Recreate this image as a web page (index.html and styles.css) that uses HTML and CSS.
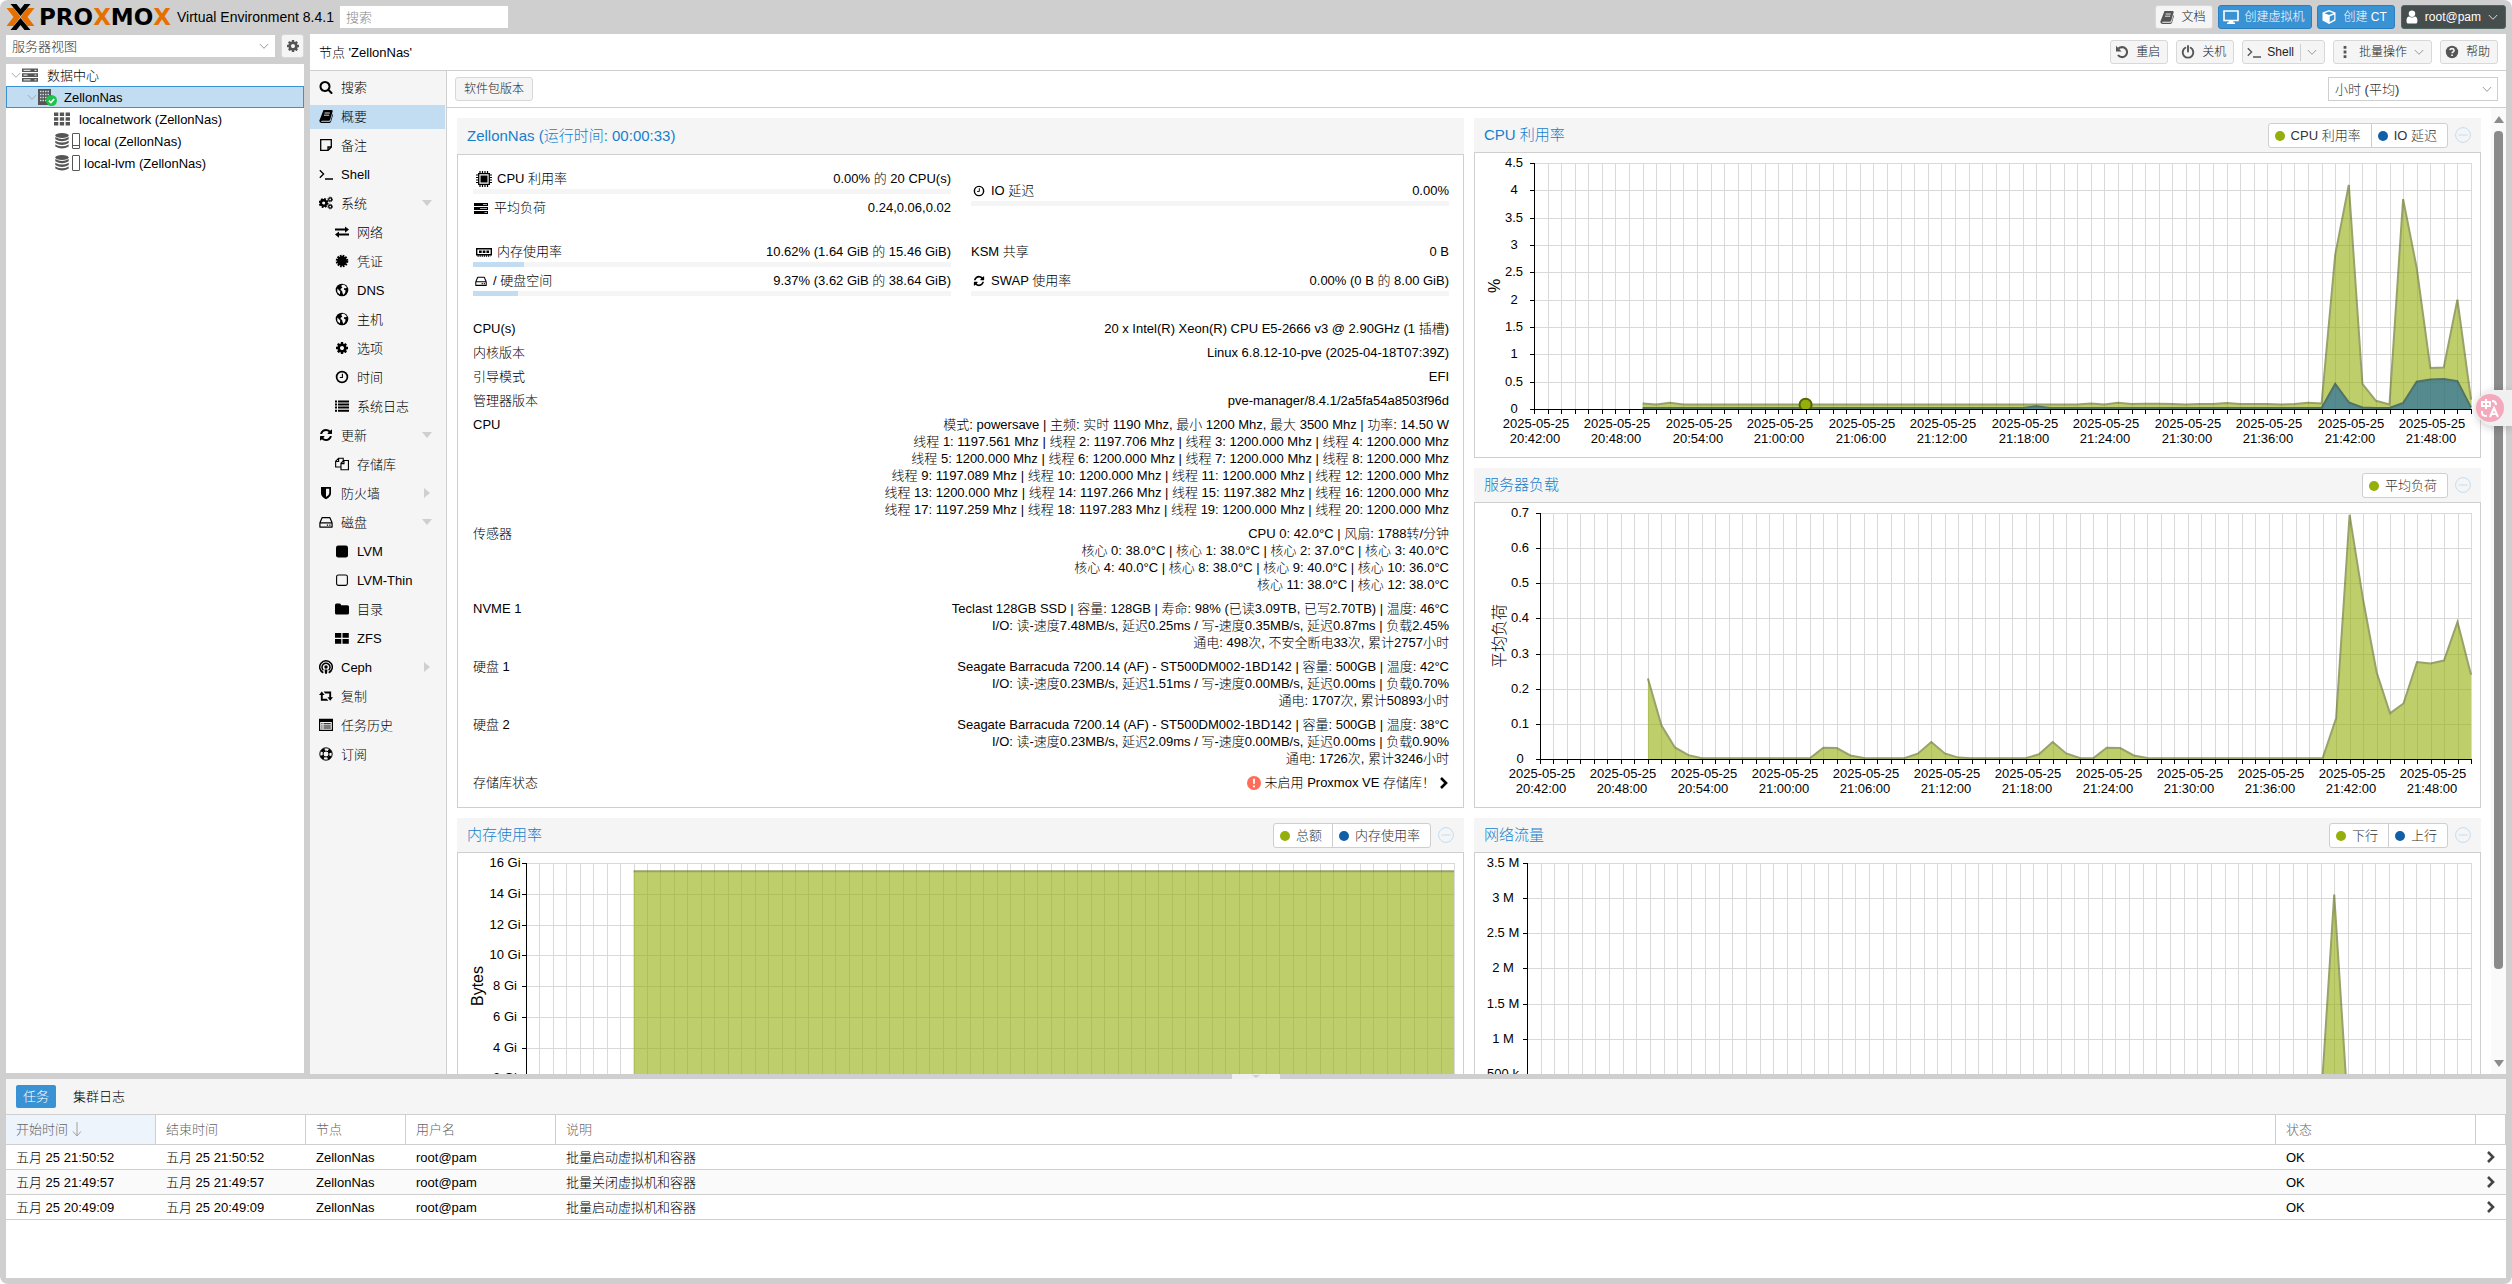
FILE: index.html
```html
<!DOCTYPE html>
<html lang="zh-CN">
<head>
<meta charset="utf-8">
<title>ZellonNas - Proxmox Virtual Environment</title>
<link rel="stylesheet" href="styles.css">
</head>
<body>
<svg class="sprite" aria-hidden="true">
  <symbol id="search" viewBox="0 0 1792 1792"><path d="M1216 832q0-185-131.500-316.500t-316.500-131.500-316.500 131.500-131.500 316.500 131.500 316.500 316.500 131.500 316.500-131.500 131.500-316.500zm512 832q0 52-38 90t-90 38q-54 0-90-38l-343-342q-179 124-399 124-143 0-273.500-55.500t-225-150-150-225-55.500-273.500 55.500-273.500 150-225 225-150 273.500-55.500 273.500 55.500 225 150 150 225 55.500 273.500q0 220-124 399l343 343q37 37 37 90z"/></symbol>
  <symbol id="cog" viewBox="0 0 1792 1792"><path d="M1152 896q0-106-75-181t-181-75-181 75-75 181 75 181 181 75 181-75 75-181zm512-109v222q0 12-8 23t-20 13l-185 28q-19 54-39 91 35 50 107 138 10 12 10 25t-9 23q-27 37-99 108t-94 71q-12 0-26-9l-138-108q-44 23-91 38-16 136-29 186-7 28-36 28h-222q-14 0-24.500-8.500t-11.500-21.500l-28-184q-49-16-90-37l-141 107q-10 9-25 9-14 0-25-11-126-114-165-168-7-10-7-23 0-12 8-23 15-21 51-66.500t54-70.500q-27-50-41-99l-183-27q-13-2-21-12.500t-8-23.500v-222q0-12 8-23t19-13l186-28q14-46 39-92-40-57-107-138-10-12-10-24 0-10 9-23 26-36 98.500-107.500t94.500-71.500q13 0 26 10l138 107q44-23 91-38 16-136 29-186 7-28 36-28h222q14 0 24.500 8.500t11.500 21.500l28 184q49 16 90 37l142-107q9-9 24-9 13 0 25 10 129 119 165 170 7 8 7 22 0 12-8 23-15 21-51 66.500t-54 70.500q26 50 41 98l183 28q13 2 21 12.500t8 23.500z"/></symbol>
  <symbol id="refresh" viewBox="0 0 1792 1792"><path d="M1639 1056q0 5-1 7-64 268-268 434.500t-478 166.500q-146 0-282.500-55t-243.500-157l-129 129q-19 19-45 19t-45-19-19-45v-448q0-26 19-45t45-19h448q26 0 45 19t19 45-19 45l-137 137q71 66 161 102t187 36q134 0 250-65t186-179q11-17 53-117 8-23 30-23h192q13 0 22.500 9.500t9.500 22.500zm25-800v448q0 26-19 45t-45 19h-448q-26 0-45-19t-19-45 19-45l138-138q-148-137-349-137-134 0-250 65t-186 179q-11 17-53 117-8 23-30 23h-199q-13 0-22.500-9.500t-9.500-22.500v-7q65-268 270-434.500t480-166.500q146 0 284 55.500t245 156.500l130-129q19-19 45-19t45 19 19 45z"/></symbol>
  <symbol id="user" viewBox="200 100 1400 1600"><path d="M1536 1399q0 109-62.500 187t-150.500 78h-854q-88 0-150.500-78t-62.500-187q0-85 8.500-160.500t31.500-152 58.500-131 94-89 134.500-34.500q131 128 313 128t313-128q76 0 134.500 34.500t94 89 58.500 131 31.500 152 8.500 160.500zm-256-887q0 159-112.500 271.500t-271.500 112.500-271.500-112.500-112.500-271.500 112.500-271.500 271.500-112.500 271.500 112.500 112.500 271.500z"/></symbol>
  <symbol id="book" viewBox="0 0 14 14"><path d="M4.500 1h8.200q1.200.2.900 1.400l-2.300 8q-.4 1.300-1.600 1.300H3q-.9 0-1 .5t.8.500h7.600q.9 0 1.200-.8l1.900-7q.7.500.4 1.400l-1.800 6.300q-.4 1.300-1.600 1.300H2.300Q.2 13.700.4 11.600z"/><path d="M5.600 4h5.200M5 6.200h5.200" stroke="#f5f5f5" stroke-width=".9"/></symbol>
  <symbol id="note" viewBox="0 0 14 14"><path d="M1.700 1.700h10.600v7.500l-3.200 3.100H1.700zM12 9H9v3" fill="none" stroke="currentColor" stroke-width="1.300"/></symbol>
  <symbol id="terminal" viewBox="0 0 14 14"><path d="M.8 3.200 4.600 7 .8 10.800M6 12h8" fill="none" stroke="currentColor" stroke-width="1.300"/></symbol>
  <symbol id="cogs" viewBox="0 0 15 14"><circle cx="5" cy="7" r="3" fill="none" stroke="currentColor" stroke-width="2.600"/><circle cx="5" cy="7" r="4.400" fill="none" stroke="currentColor" stroke-width="1.800" stroke-dasharray="1.900 1.556"/><g fill="none" stroke="currentColor"><circle cx="12" cy="3.200" r="1.600" stroke-width="1.300"/><circle cx="12" cy="3.200" r="2.500" stroke-dasharray="1.200 .76"/><circle cx="12" cy="10.800" r="1.600" stroke-width="1.300"/><circle cx="12" cy="10.800" r="2.500" stroke-dasharray="1.200 .76"/></g></symbol>
  <symbol id="exchange" viewBox="0 0 14 14"><path d="M0 3.600h10V1.400L14 4.600l-4 3.200V5.600H0zM14 8.600H4V6.600L0 9.600l4 3.200v-2.200h10z"/></symbol>
  <symbol id="certificate" viewBox="0 0 14 14"><circle cx="7" cy="7" r="5"/><circle cx="7" cy="7" r="5.300" fill="none" stroke="currentColor" stroke-width="2" stroke-dasharray="1.700 1.075"/></symbol>
  <symbol id="globe" viewBox="0 0 14 14"><circle cx="7" cy="7" r="6.300"/><path d="M6.600 1.900 9 1.700l2.900 2.600-1 1-1.500-.3-.6 1.500 1.800.9-.4 2.200-1.600 2.300-1.100-2-.4-1.900L5.500 7 6 5.500l1.400-.8-.9-1.200zM2.300 5.600l1.800 1.600 1.200 1.600-.6 2.600L2.300 9z" fill="#f5f5f5"/></symbol>
  <symbol id="clock" viewBox="0 0 14 14"><circle cx="7" cy="7" r="5.400" fill="none" stroke="currentColor" stroke-width="1.700"/><path d="M7.400 3.800v3.700H4.800" fill="none" stroke="currentColor" stroke-width="1.100"/></symbol>
  <symbol id="list" viewBox="0 0 14 14"><path d="M0 1.400h2v2H0zM3 1.400h11v2H3zM0 4.500h2v2H0zM3 4.500h11v2H3zM0 7.600h2v2H0zM3 7.600h11v2H3zM0 10.700h2v2H0zM3 10.700h11v2H3z"/></symbol>
  <symbol id="files" viewBox="0 0 15 14"><path d="M6.400 10.200H.7V4L3.800.9h5v2.500M.9 4.300h3V1M6.400 6.200l3-2.900h5v9.800h-8zM6.600 6.600h3v-3" fill="none" stroke="currentColor" stroke-width="1.200"/></symbol>
  <symbol id="shield" viewBox="0 0 14 14"><path d="M2 1h10v6.200q0 3.600-5 6-5-2.400-5-6zM7 2.800v8.300q3.300-1.600 3.300-4V2.800z" fill-rule="evenodd"/></symbol>
  <symbol id="hdd" viewBox="0 0 14 14"><path d="M.9 7.800h12.200v4.300H.9zM.9 7.800l2.300-5.200h7.600l2.300 5.200" fill="none" stroke="currentColor" stroke-width="1.200" stroke-linejoin="round"/><path d="M7.800 9.400h1.300v1.300H7.800zM10.200 9.400h1.300v1.300h-1.300z"/></symbol>
  <symbol id="square" viewBox="0 0 14 14"><rect x="1" y="1.500" width="12" height="12" rx="2.200"/></symbol>
  <symbol id="square-o" viewBox="0 0 14 14"><rect x="1.600" y="2" width="10.800" height="10.400" rx="1.800" fill="none" stroke="currentColor" stroke-width="1.100"/></symbol>
  <symbol id="folder" viewBox="0 0 14 14"><path d="M0 3q0-1.500 1.500-1.500h3Q6 1.500 6 3v.3h6.500Q14 3.300 14 4.800V11q0 1.500-1.500 1.500h-11Q0 12.500 0 11z"/></symbol>
  <symbol id="th-large" viewBox="0 0 14 14"><path d="M0 2h6.300v4.700H0zM7.500 2h6.300v4.700H7.500zM0 8h6.300v4.700H0zM7.500 8h6.300v4.700H7.500z"/></symbol>
  <symbol id="ceph" viewBox="0 0 14 14"><path d="M4.300 12.800A6.300 6.300 0 1 1 9.700 12.800M4.400 10.300A4 4 0 1 1 9.600 10.300" fill="none" stroke="currentColor" stroke-width="1.500"/><circle cx="7" cy="7" r="1.700"/><path d="M5.600 9.400h2.800L8 13.800H6z"/></symbol>
  <symbol id="retweet" viewBox="0 0 15 14"><path d="M2 12V6H0l3-3.700L6 6H4v4h4.300l1.700 2zM13 2.300v6h2l-3 3.700L9 8.300h2v-4H6.700L5 2.300z"/></symbol>
  <symbol id="list-alt" viewBox="0 0 14 14"><path d="M.6 1.400h12.800v11H.6z" fill="none" stroke="currentColor" stroke-width="1.200"/><path d="M0 1h14v3H0zM2.300 5.300h1.200v1H2.300zM4.500 5.300h7.300v1H4.500zM2.300 7.400h1.200v1H2.300zM4.500 7.400h7.300v1H4.500zM2.300 9.500h1.200v1H2.300zM4.500 9.500h7.300v1H4.500z"/></symbol>
  <symbol id="support" viewBox="0 0 14 14"><circle cx="7" cy="7" r="6.200" fill="none" stroke="currentColor" stroke-width="1"/><circle cx="7" cy="7" r="3" fill="none" stroke="currentColor" stroke-width="1"/><circle cx="7" cy="7" r="4.800" fill="none" stroke="currentColor" stroke-width="3" stroke-dasharray="3.770 3.770" stroke-dashoffset="-1.885"/></symbol>
  <symbol id="undo" viewBox="0 0 14 14"><path d="M3.500 3.600A5 5 0 1 1 3 10" fill="none" stroke="currentColor" stroke-width="2.100"/><path d="M1 .8v5.700h5.600z"/></symbol>
  <symbol id="power" viewBox="0 0 14 14"><path d="M4.300 2.800a5.300 5.300 0 1 0 5.400 0" fill="none" stroke="currentColor" stroke-width="1.900" stroke-linecap="round"/><path d="M7 1v5.600" stroke="currentColor" stroke-width="1.900" stroke-linecap="round"/></symbol>
  <symbol id="ellipsis" viewBox="0 0 14 14"><path d="M5.600 1h2.800v2.800H5.600zM5.600 5.600h2.800v2.800H5.600zM5.600 10.200h2.800V13H5.600z"/></symbol>
  <symbol id="question" viewBox="0 0 14 14"><circle cx="7" cy="7" r="6.200"/><path d="M4.900 5.200Q5.200 3.600 7 3.600t2.100 1.700q0 1-1.100 1.700-.9.500-.9 1.300" fill="none" stroke="#f5f5f5" stroke-width="1.600"/><path d="M6.200 9.400h1.700V11H6.200z" fill="#f5f5f5"/></symbol>
  <symbol id="desktop" viewBox="0 0 16 14"><path d="M1 1h14v9.500H1z" fill="none" stroke="currentColor" stroke-width="1.600"/><path d="M6 10.500h4l.5 2H12V14H4v-1.500h1.500z"/></symbol>
  <symbol id="cube" viewBox="0 0 14 14"><path d="M7 0l6.500 2.600v7.800L7 14 .5 10.400V2.600zM7 1.400 2.500 3.200 7 5l4.500-1.800zM7.700 12l4.500-2.500V4.600L7.700 6.400z" fill-rule="evenodd"/></symbol>
  <symbol id="cpu" viewBox="0 0 16 16"><path d="M2.700 2.700h10.600v10.600H2.700z" fill="none" stroke="currentColor" stroke-width="1.300"/><path d="M4.500 4.500h7v7h-7z"/><path d="M4 0v2.500M6.500 0v2.500M9 0v2.500M11.500 0v2.500M4 13.500V16M6.500 13.500V16M9 13.500V16M11.500 13.500V16M0 4h2.500M0 6.500h2.500M0 9h2.500M0 11.500h2.500M13.500 4H16M13.500 6.500H16M13.500 9H16M13.500 11.500H16" stroke="currentColor" stroke-width="1.200"/></symbol>
  <symbol id="tasks" viewBox="0 0 14 14"><path d="M0 2h14v3H0zM0 6h14v3H0zM0 10h14v3H0z"/><path d="M9 3.500h4M6 7.500h7M10.500 11.500H13" stroke="#aaa"/></symbol>
  <symbol id="memory" viewBox="0 0 16 16"><path d="M.7 4.700h14.600v6H.7z" fill="none" stroke="currentColor" stroke-width="1.400"/><path d="M3 6.500h2.700v2.400H3zM6.700 6.500h2.700v2.400H6.700zM10.400 6.500h2.700v2.400h-2.700z"/><path d="M1.500 12h13" stroke="currentColor" stroke-width="1.600" stroke-dasharray="1.200 .9"/></symbol>
  <symbol id="server" viewBox="0 0 16 16"><path d="M0 1.500h16v3.600H0zM0 6.300h16v3.600H0zM0 11.100h16v3.600H0z"/><path d="M1.500 3.300h7M1.500 8.100h4M1.500 12.900h7M12.500 3.300h2M12.500 8.100h2M12.500 12.900h2" stroke="#fff"/></symbol>
  <symbol id="building" viewBox="0 0 19 17"><path d="M0 0h13v16H0z"/><path d="M2 2.500h9M2 5.500h9M2 8.500h9M2 11.500h9" stroke="#c2ddf2" stroke-width="1.400" stroke-dasharray="1.500 1"/><circle cx="13.500" cy="11.500" r="5.500" fill="#21bf4b"/><path d="m10.900 11.600 2 2 3.300-3.600" fill="none" stroke="#fff" stroke-width="1.700"/></symbol>
  <symbol id="th" viewBox="0 0 16 14"><path d="M0 .5h4.300v3.400H0zM5.800.5h4.300v3.400H5.800zM11.600.5H16v3.400h-4.400zM0 5.300h4.300v3.400H0zM5.800 5.300h4.300v3.400H5.800zM11.600 5.300H16v3.400h-4.400zM0 10.100h4.300v3.400H0zM5.800 10.100h4.300v3.400H5.800zM11.600 10.100H16v3.400h-4.400z"/></symbol>
  <symbol id="database" viewBox="0 0 14 16"><ellipse cx="7" cy="2.500" rx="6.700" ry="2.400"/><path d="M.3 4q6.700 3.800 13.400 0v2.300q-6.700 3.800-13.400 0zM.3 7.700q6.700 3.800 13.400 0V10q-6.700 3.800-13.400 0zM.3 11.400q6.700 3.800 13.400 0v2.200q-6.700 4-13.400 0z"/></symbol>
  <symbol id="exclaim" viewBox="0 0 14 14"><circle cx="7" cy="7" r="7"/><path d="M6 2.700h2.100l-.3 5.400H6.300zM6 9.400h2v1.900H6z" fill="#fff"/></symbol>
  <symbol id="chevron" viewBox="0 0 10 14"><path d="m2 2 5 5-5 5" fill="none" stroke="currentColor" stroke-width="2.600"/></symbol>
  <symbol id="down" viewBox="0 0 10 10"><path d="m.8 3 4.200 4.300L9.200 3" fill="none" stroke="currentColor"/></symbol>
  <symbol id="collapse" viewBox="0 0 16 16"><circle cx="8" cy="8" r="7.400" fill="none" stroke="currentColor"/><path d="M3.500 8h9" stroke="currentColor"/></symbol>
</svg>

<div class="app">
  <header class="topbar">
    <a class="logo" href="#" aria-label="Proxmox">
      <svg class="emblem" viewBox="0 0 28 26"><g fill="#e57000"><path d="M0 4h7l7 9-7 9H0l7-9z"/><path d="M28 4h-7l-7 9 7 9h7l-7-9z"/></g><path d="M4 0h6l4 5 4-5h6L14 12zM4 26h6l4-5 4 5h6L14 14z"/></svg>
      <span class="wordmark">PRO<b>X</b>MO<b>X</b></span>
    </a>
    <span class="version">Virtual Environment 8.4.1</span>
    <input class="global-search" type="search" placeholder="搜索" aria-label="搜索">
    <div class="top-actions">
      <button class="btn top-doc"><svg class="ic"><use href="#book"/></svg>文档</button>
      <button class="btn primary"><svg class="ic wide"><use href="#desktop"/></svg>创建虚拟机</button>
      <button class="btn primary"><svg class="ic"><use href="#cube"/></svg>创建 CT</button>
      <button class="btn account"><svg class="ic"><use href="#user"/></svg>root@pam<svg class="caret"><use href="#down"/></svg></button>
    </div>
  </header>

  <div class="workspace">
    <aside class="resources">
      <div class="view-row">
        <label class="combo"><select aria-label="视图"><option>服务器视图</option></select><svg class="caret"><use href="#down"/></svg></label>
        <button class="btn gear" aria-label="设置"><svg class="ic"><use href="#cog"/></svg></button>
      </div>
      <ul class="tree">
        <li class="node"><svg class="caret"><use href="#down"/></svg><svg class="tic"><use href="#server"/></svg><span>数据中心</span></li>
        <li class="node l1 selected"><svg class="caret"><use href="#down"/></svg><svg class="tic status"><use href="#building"/></svg><span>ZellonNas</span></li>
        <li class="node l2"><svg class="tic"><use href="#th"/></svg><span>localnetwork (ZellonNas)</span></li>
        <li class="node l2 store"><svg class="tic"><use href="#database"/></svg><i class="usage low"></i><span>local (ZellonNas)</span></li>
        <li class="node l2 store"><svg class="tic"><use href="#database"/></svg><i class="usage"></i><span>local-lvm (ZellonNas)</span></li>
      </ul>
    </aside>

    <main class="content">
      <div class="titlebar">
        <h1>节点 'ZellonNas'</h1>
        <button class="btn"><svg class="ic"><use href="#undo"/></svg>重启</button>
        <button class="btn"><svg class="ic"><use href="#power"/></svg>关机</button>
        <button class="btn split"><svg class="ic"><use href="#terminal"/></svg><span>Shell</span><svg class="caret"><use href="#down"/></svg></button>
        <button class="btn"><svg class="ic"><use href="#ellipsis"/></svg>批量操作<svg class="caret"><use href="#down"/></svg></button>
        <button class="btn"><svg class="ic"><use href="#question"/></svg>帮助</button>
      </div>
      <div class="body">
        <nav class="menu">
          <a href="#"><svg class="ic"><use href="#search"/></svg>搜索</a>
          <a href="#" class="active"><svg class="ic"><use href="#book"/></svg>概要</a>
          <a href="#"><svg class="ic"><use href="#note"/></svg>备注</a>
          <a href="#"><svg class="ic"><use href="#terminal"/></svg>Shell</a>
          <a href="#" class="open"><svg class="ic"><use href="#cogs"/></svg>系统</a>
          <a href="#" class="sub"><svg class="ic"><use href="#exchange"/></svg>网络</a>
          <a href="#" class="sub"><svg class="ic"><use href="#certificate"/></svg>凭证</a>
          <a href="#" class="sub"><svg class="ic"><use href="#globe"/></svg>DNS</a>
          <a href="#" class="sub"><svg class="ic"><use href="#globe"/></svg>主机</a>
          <a href="#" class="sub"><svg class="ic"><use href="#cog"/></svg>选项</a>
          <a href="#" class="sub"><svg class="ic"><use href="#clock"/></svg>时间</a>
          <a href="#" class="sub"><svg class="ic"><use href="#list"/></svg>系统日志</a>
          <a href="#" class="open"><svg class="ic"><use href="#refresh"/></svg>更新</a>
          <a href="#" class="sub"><svg class="ic"><use href="#files"/></svg>存储库</a>
          <a href="#" class="closed"><svg class="ic"><use href="#shield"/></svg>防火墙</a>
          <a href="#" class="open"><svg class="ic"><use href="#hdd"/></svg>磁盘</a>
          <a href="#" class="sub"><svg class="ic"><use href="#square"/></svg>LVM</a>
          <a href="#" class="sub"><svg class="ic"><use href="#square-o"/></svg>LVM-Thin</a>
          <a href="#" class="sub"><svg class="ic"><use href="#folder"/></svg>目录</a>
          <a href="#" class="sub"><svg class="ic"><use href="#th-large"/></svg>ZFS</a>
          <a href="#" class="closed"><svg class="ic"><use href="#ceph"/></svg>Ceph</a>
          <a href="#"><svg class="ic"><use href="#retweet"/></svg>复制</a>
          <a href="#"><svg class="ic"><use href="#list-alt"/></svg>任务历史</a>
          <a href="#"><svg class="ic"><use href="#support"/></svg>订阅</a>
        </nav>
        <section class="summary">
          <div class="toolbar">
            <button class="btn">软件包版本</button>
            <label class="combo range"><select aria-label="时间范围"><option>小时 (平均)</option></select><svg class="caret"><use href="#down"/></svg></label>
          </div>
          <div class="scroller">
            <div class="cards">
              <article class="card info">
                <header><h2>ZellonNas (运行时间: 00:00:33)</h2></header>
                <div class="card-body">
                  <div class="stats">
                    <div class="stat-col">
                      <div class="stat"><p><svg class="pic"><use href="#cpu"/></svg><span>CPU 利用率</span><b>0.00% 的 20 CPU(s)</b></p><div class="bar"></div></div>
                      <div class="stat"><p><svg class="tk"><use href="#tasks"/></svg><span>平均负荷</span><b>0.24,0.06,0.02</b></p></div>
                    </div>
                    <div class="stat-col">
                      <div class="stat"><p><svg class="sic"><use href="#clock"/></svg><span>IO 延迟</span><b>0.00%</b></p><div class="bar"></div></div>
                    </div>
                    <div class="stat-col">
                      <div class="stat"><p><svg class="pic"><use href="#memory"/></svg><span>内存使用率</span><b>10.62% (1.64 GiB 的 15.46 GiB)</b></p><div class="bar"><i style="width:10.62%"></i></div></div>
                      <div class="stat"><p><svg class="sic"><use href="#hdd"/></svg><span>/ 硬盘空间</span><b>9.37% (3.62 GiB 的 38.64 GiB)</b></p><div class="bar"><i style="width:9.37%"></i></div></div>
                    </div>
                    <div class="stat-col">
                      <div class="stat"><p><span>KSM 共享</span><b>0 B</b></p><div class="bar none"></div></div>
                      <div class="stat"><p><svg class="sic"><use href="#refresh"/></svg><span>SWAP 使用率</span><b>0.00% (0 B 的 8.00 GiB)</b></p><div class="bar"></div></div>
                    </div>
                  </div>
                  <dl class="details">
                    <dt>CPU(s)</dt><dd>20 x Intel(R) Xeon(R) CPU E5-2666 v3 @ 2.90GHz (1 插槽)</dd>
                    <dt>内核版本</dt><dd>Linux 6.8.12-10-pve (2025-04-18T07:39Z)</dd>
                    <dt>引导模式</dt><dd>EFI</dd>
                    <dt>管理器版本</dt><dd>pve-manager/8.4.1/2a5fa54a8503f96d</dd>
                    <dt>CPU</dt><dd>模式: powersave | 主频: 实时 1190 Mhz, 最小 1200 Mhz, 最大 3500 Mhz | 功率: 14.50 W<br>线程 1: 1197.561 Mhz | 线程 2: 1197.706 Mhz | 线程 3: 1200.000 Mhz | 线程 4: 1200.000 Mhz<br>线程 5: 1200.000 Mhz | 线程 6: 1200.000 Mhz | 线程 7: 1200.000 Mhz | 线程 8: 1200.000 Mhz<br>线程 9: 1197.089 Mhz | 线程 10: 1200.000 Mhz | 线程 11: 1200.000 Mhz | 线程 12: 1200.000 Mhz<br>线程 13: 1200.000 Mhz | 线程 14: 1197.266 Mhz | 线程 15: 1197.382 Mhz | 线程 16: 1200.000 Mhz<br>线程 17: 1197.259 Mhz | 线程 18: 1197.283 Mhz | 线程 19: 1200.000 Mhz | 线程 20: 1200.000 Mhz</dd>
                    <dt>传感器</dt><dd>CPU 0: 42.0°C | 风扇: 1788转/分钟<br>核心 0: 38.0°C | 核心 1: 38.0°C | 核心 2: 37.0°C | 核心 3: 40.0°C<br>核心 4: 40.0°C | 核心 8: 38.0°C | 核心 9: 40.0°C | 核心 10: 36.0°C<br>核心 11: 38.0°C | 核心 12: 38.0°C</dd>
                    <dt>NVME 1</dt><dd>Teclast 128GB SSD | 容量: 128GB | 寿命: 98% (已读3.09TB, 已写2.70TB) | 温度: 46°C<br>I/O: 读-速度7.48MB/s, 延迟0.25ms / 写-速度0.35MB/s, 延迟0.87ms | 负载2.45%<br>通电: 498次, 不安全断电33次, 累计2757小时</dd>
                    <dt>硬盘 1</dt><dd>Seagate Barracuda 7200.14 (AF) - ST500DM002-1BD142 | 容量: 500GB | 温度: 42°C<br>I/O: 读-速度0.23MB/s, 延迟1.51ms / 写-速度0.00MB/s, 延迟0.00ms | 负载0.70%<br>通电: 1707次, 累计50893小时</dd>
                    <dt>硬盘 2</dt><dd>Seagate Barracuda 7200.14 (AF) - ST500DM002-1BD142 | 容量: 500GB | 温度: 38°C<br>I/O: 读-速度0.23MB/s, 延迟2.09ms / 写-速度0.00MB/s, 延迟0.00ms | 负载0.90%<br>通电: 1726次, 累计3246小时</dd>
                    <dt>存储库状态</dt><dd class="repo"><svg class="ic warn"><use href="#exclaim"/></svg><span>未启用 Proxmox VE 存储库！</span><svg class="go"><use href="#chevron"/></svg></dd>
                  </dl>
                </div>
              </article>
              <article class="card">
                <header><h2>CPU 利用率</h2><div class="legend"><button><i class="dot green"></i>CPU 利用率</button><button><i class="dot blue"></i>IO 延迟</button></div><svg class="fold"><use href="#collapse"/></svg></header>
                <div class="card-body chart" data-chart="cpu"></div>
              </article>
              <article class="card">
                <header><h2>服务器负载</h2><div class="legend"><button><i class="dot green"></i>平均负荷</button></div><svg class="fold"><use href="#collapse"/></svg></header>
                <div class="card-body chart" data-chart="load"></div>
              </article>
              <article class="card">
                <header><h2>内存使用率</h2><div class="legend"><button><i class="dot green"></i>总额</button><button><i class="dot blue"></i>内存使用率</button></div><svg class="fold"><use href="#collapse"/></svg></header>
                <div class="card-body chart" data-chart="memory"></div>
              </article>
              <article class="card">
                <header><h2>网络流量</h2><div class="legend"><button><i class="dot green"></i>下行</button><button><i class="dot blue"></i>上行</button></div><svg class="fold"><use href="#collapse"/></svg></header>
                <div class="card-body chart" data-chart="network"></div>
              </article>
            </div>
            <div class="scrollbar" aria-hidden="true"><i class="arrow up"></i><div class="track"><i class="thumb"></i></div><i class="arrow dn"></i></div>
          </div>
        </section>
      </div>
    </main>
  </div>

  <div class="splitter"><svg class="grip" viewBox="0 0 48 5"><path d="M20 1h8l-4 3z" fill="#cfcfcf"/></svg></div>

  <section class="log">
    <div class="tabs"><button class="tab on">任务</button><button class="tab">集群日志</button></div>
    <table>
      <colgroup><col class="c-time"><col class="c-time"><col class="c-node"><col class="c-time"><col><col class="c-status"><col class="c-more"></colgroup>
      <thead><tr><th class="sorted">开始时间<svg class="sort" viewBox="0 0 10 15"><path d="M5 0v14M1 9.500 5 14l4-4.500" fill="none" stroke="#a0a0a0"/></svg></th><th>结束时间</th><th>节点</th><th>用户名</th><th>说明</th><th>状态</th><th></th></tr></thead>
      <tbody>
        <tr><td>五月 25 21:50:52</td><td>五月 25 21:50:52</td><td>ZellonNas</td><td>root@pam</td><td>批量启动虚拟机和容器</td><td>OK</td><td class="more"><svg class="go"><use href="#chevron"/></svg></td></tr>
        <tr><td>五月 25 21:49:57</td><td>五月 25 21:49:57</td><td>ZellonNas</td><td>root@pam</td><td>批量关闭虚拟机和容器</td><td>OK</td><td class="more"><svg class="go"><use href="#chevron"/></svg></td></tr>
        <tr><td>五月 25 20:49:09</td><td>五月 25 20:49:09</td><td>ZellonNas</td><td>root@pam</td><td>批量启动虚拟机和容器</td><td>OK</td><td class="more"><svg class="go"><use href="#chevron"/></svg></td></tr>
      </tbody>
    </table>
  </section>
</div>

<button class="translate" aria-label="翻译"><svg viewBox="0 0 28 28"><circle cx="14" cy="14" r="14" fill="#f5a9bd"/><g fill="none" stroke="#fff" stroke-width="2"><path d="M6 8h8v4H6zM10 5v10"/><path d="M16 7q4 0 4 4M6 17v2q0 3 5 3"/><path d="m14 23 4-9 4 9M15.500 20h5"/></g></svg></button>
<script src="charts.js"></script>
</body>
</html>
```
FILE: styles.css
```css
* { box-sizing: border-box; }
html, body { height: 100%; }
body {
  margin: 0;
  background: #fff;
  color: #000;
  font-family: "Liberation Sans", "Noto Sans CJK SC", sans-serif;
  font-size: 13px;
  font-weight: 300;
  line-height: 17px;
  overflow: hidden;
}
h1, h2, p, dl, dd, dt, ul { margin: 0; padding: 0; font-weight: 300; }
button, input, select { font: inherit; color: inherit; margin: 0; }
svg { fill: currentColor; flex: none; display: block; }
.sprite { position: absolute; width: 0; height: 0; }
a { color: inherit; text-decoration: none; }

.app { display: flex; flex-direction: column; height: 100vh; background: #cfcfcf; border-radius: 8px; overflow: hidden; padding: 0 6px 6px; }

/* top bar */
.topbar { display: flex; align-items: center; height: 34px; flex: none; }
.logo { display: flex; align-items: center; gap: 4px; width: 171px; }
.emblem { width: 29px; height: 26px; }
.wordmark { font: bold 23px/26px "DejaVu Sans", sans-serif; }
.wordmark b { color: #e57000; }
.version { font-size: 14px; white-space: nowrap; }
.global-search { width: 168px; height: 22px; margin-left: 6px; border: 0; padding: 0 6px; background: #fff; outline: 0; border-radius: 0; }
.global-search::placeholder { color: #888; }
.top-actions { display: flex; gap: 5px; margin-left: auto; }

.btn {
  display: inline-flex; align-items: center; gap: 7px; height: 24px; padding: 0 7px 0 4px;
  border: 1px solid #d8d8d8; border-radius: 3px; background: #f5f5f5; font-size: 12px; color: #222; white-space: nowrap;
}
.btn .ic { color: #555; }
.btn.primary { background: #3892d4; border-color: #2a7fc0; color: #fff; }
.btn.primary .ic, .btn.account .ic { color: #fff; }
.btn.account { background: #464d4d; border-color: #4f6864; color: #fff; margin-left: 1px; }
.btn.account .ic { width: 12px; }
.ic { width: 14px; height: 14px; }
.ic.wide { width: 16px; margin-right: -2px; }
.caret { width: 10px; height: 10px; color: #999; }
.account .caret { color: #ddd; }

/* resource tree */
.workspace { display: flex; gap: 6px; flex: 1; min-height: 0; }
.resources { width: 298px; display: flex; flex-direction: column; flex: none; }
.view-row { display: flex; gap: 6px; height: 30px; align-items: flex-start; flex: none; }
.combo { display: grid; flex: 1; height: 24px; align-items: center; }
.combo > * { grid-area: 1 / 1; }
.combo select { appearance: none; width: 100%; height: 24px; border: 0; border-radius: 0; padding: 0 6px; background: #fff; color: #333; border-top: 1px solid #cfcfcf; border-bottom: 1px solid #cfcfcf; }
.combo .caret { justify-self: end; margin-right: 6px; pointer-events: none; }
.gear { width: 23px; padding: 0; justify-content: center; }
.tree { flex: 1; list-style: none; background: #fff; margin-bottom: 1px; }
.node { display: flex; align-items: center; height: 22px; padding-left: 4px; border: 1px solid transparent; }
.node span { margin-left: 9px; }
.tic { width: 16px; height: 16px; color: #555; }
.node .caret { margin-right: 1px; color: #aaa; }
.l1 { padding-left: 20px; }
.l1 span { margin-left: 7px; }
.tic.status { width: 19px; height: 17px; }
.l2 { padding-left: 47px; }
.store span { margin-left: 4px; }
.usage { display: block; width: 8px; height: 16px; margin-left: 2px; border: 1px solid #555; border-radius: 1px; }
.usage.low { box-shadow: inset 0 -2px #fff, inset 0 -3px #555; }
.selected { background: #c2ddf2; border-color: #3892d4; }

/* node panel */
.content { flex: 1; min-width: 0; display: flex; flex-direction: column; background: #fff; }
.titlebar { display: flex; align-items: center; gap: 8px; height: 37px; flex: none; padding: 0 8px 0 9px; border-bottom: 1px solid #cfcfcf; }
h1 { font-size: 13px; margin-right: auto; }
.split span { padding-right: 6px; border-right: 1px solid #cfcfcf; }
.btn.split { gap: 6px; }
.body { display: flex; flex: 1; min-height: 0; }
.menu { width: 137px; flex: none; background: #f5f5f5; border-right: 1px solid #cfcfcf; padding: 5px 1px 0 0; display: flex; flex-direction: column; gap: 5px; }
.menu a { display: flex; align-items: center; gap: 8px; height: 24px; padding: 0 0 2px 9px; flex: none; }
.menu a.sub { padding-left: 25px; }
.menu .active { background: #c2ddf2; }
.open::after, .closed::after { content: ""; margin: 0 13px 0 auto; border: 5px solid transparent; }
.open::after { border-top: 6px solid #cfcfcf; border-bottom: 0; }
.closed::after { border-left: 6px solid #cfcfcf; border-right: 0; margin-right: 15px; }
.summary { flex: 1; min-width: 0; display: flex; flex-direction: column; }
.toolbar { display: flex; justify-content: space-between; align-items: center; height: 37px; flex: none; padding: 0 8px; border-bottom: 1px solid #cfcfcf; }
.toolbar .btn { padding: 0 8px; }
.range { flex: none; width: 170px; }
.range select { border: 1px solid #cfcfcf; }
.scroller { display: flex; flex: 1; min-height: 0; overflow: hidden; }
.cards { flex: 1; min-width: 0; padding: 10px; display: grid; grid-template-columns: minmax(0, 1fr) minmax(0, 1fr); grid-auto-rows: 340px; gap: 10px; align-content: start; }
.card { display: flex; flex-direction: column; }
.card > header { display: flex; align-items: center; height: 34px; flex: none; padding: 0 10px; background: #f5f5f5; }
.card h2 { font-size: 15px; line-height: 20px; color: #157fcc; margin-right: auto; }
.info { grid-row: span 2; }
.info > header { height: 36px; }
.card-body { flex: 1; min-height: 0; border: 1px solid #cfcfcf; }
.legend { display: flex; height: 25px; margin-right: 7px; border: 1px solid #cfcfcf; border-radius: 3px; background: #fff; overflow: hidden; }
.legend button { display: flex; align-items: center; gap: 6px; padding: 0 10px 0 6px; border: 0; background: none; color: #333; }
.legend button + button { border-left: 1px solid #cfcfcf; }
.dot { width: 10px; height: 10px; border-radius: 50%; margin-top: 2px; }
.green { background: #94ae0a; }
.blue { background: #115fa6; }
.fold { width: 16px; height: 16px; color: #c2ddf2; }

/* host status */
.info .card-body { padding: 15px 14px 0 15px; }
.stats { display: grid; grid-template-columns: minmax(0, 1fr) minmax(0, 1fr); gap: 25px 20px; }
.stat-col { display: flex; flex-direction: column; justify-content: center; gap: 5px; }
.stat p { display: flex; align-items: center; height: 17px; margin-bottom: 2px; }
.stat p b { margin-left: auto; font-weight: 300; }
.bar { height: 5px; background: #f5f5f5; }
.bar.none { background: none; }
.bar i { display: block; height: 5px; background: #c2ddf2; }
.pic { width: 16px; height: 16px; margin: 0 5px 0 3px; }
.tk { width: 14px; height: 14px; margin: 0 6px 0 1px; }
.sic { width: 12px; height: 12px; margin: 0 6px 0 2px; }
.details { display: grid; grid-template-columns: auto 1fr; row-gap: 7px; margin-top: 24px; }
.details dd { text-align: right; }
.details .repo { display: flex; align-items: center; justify-content: flex-end; gap: 4px; }
.warn { color: #ff6c59; }
.go { width: 10px; height: 14px; }

.chart svg { width: 100%; height: 100%; overflow: hidden; }
.chart text { font-size: 13px; text-anchor: middle; fill: #000; }
.chart text.axis-title { font-size: 16px; }
.grid-line { stroke: #d9d9d9; }
.axis { stroke: #000; }
.series { opacity: .6; }

.scrollbar { width: 15px; flex: none; padding: 8px 3px 7px; background: #fafafa; display: flex; flex-direction: column; align-items: center; }
.arrow { border: 5px solid transparent; }
.up { border-bottom: 7px solid #8b8b8b; border-top: 0; }
.dn { border-top: 7px solid #8b8b8b; border-bottom: 0; }
.track { flex: 1; width: 9px; margin: 8px 0; }
.thumb { display: block; height: 91%; border-radius: 4px; background: #8b8b8b; }

.splitter { height: 5px; flex: none; display: flex; justify-content: center; }
.grip { width: 48px; height: 5px; background: #efefef; }

/* task log */
.log { height: 199px; flex: none; background: #fff; }
.tabs { display: flex; align-items: center; gap: 10px; height: 36px; padding: 0 10px 1px; background: #f5f5f5; border-bottom: 1px solid #cfcfcf; }
.tab { height: 23px; padding: 0 7px; border: 0; border-radius: 2px; background: none; }
.tab.on { background: #3892d4; color: #fff; }
table { width: 100%; border-collapse: separate; border-spacing: 0; table-layout: fixed; }
.c-time { width: 150px; }
.c-node { width: 100px; }
.c-status { width: 200px; }
.c-more { width: 30px; }
th, td { padding: 0 10px; text-align: left; font-weight: 300; border-bottom: 1px solid #cfcfcf; white-space: nowrap; }
th { height: 30px; color: #666; border-right: 1px solid #cfcfcf; }
th.sorted { background: #edf4fb; }
.sort { display: inline-block; width: 10px; height: 15px; margin-left: 4px; vertical-align: -3px; }
td { height: 25px; }
tbody tr:nth-child(even) { background: #fafafa; }
td.more { color: #444; }

.translate { position: fixed; right: 0; top: 390px; width: 36px; height: 36px; padding: 4px 0; border: 0; border-radius: 18px 0 0 18px; background: #f0f0f0; box-shadow: 0 2px 8px #0003; }
.translate svg { width: 28px; height: 28px; }
```
FILE: charts.js
```js
// One sample per minute, 20:42 to 21:51
const STEPS = 69;
const FIRST = 8;
const HEIGHT = 304, TOP = 10, BOTTOM = 256, RIGHT = 9;

function series(base, points) {
  const out = [];
  for (let i = FIRST; i <= STEPS; i++) out.push([i, points[i] !== undefined ? points[i] : base]);
  return out;
}

const green = ['#94ae0a', '#566606'];
const blue = ['#115fa6', '#0a3863'];

const charts = {
  cpu: {
    left: 59, label: 20, title: '%', titleX: 20, max: 4.5,
    ticks: ['0', '0.5', '1', '1.5', '2', '2.5', '3', '3.5', '4', '4.5'],
    marker: [20, 0.08],
    data: [
      [green, series(0.08, {8: .1, 9: .085, 10: .115, 41: .1, 43: .115, 44: .09, 45: .095, 46: .095, 47: .09, 48: .085, 49: .09, 50: .09, 51: .11, 52: .09, 53: .09, 54: .09, 55: .085, 56: .09, 57: .115, 58: .1, 59: 2.82, 60: 4.1, 61: .46, 62: .15, 63: .085, 64: 3.84, 65: 2.58, 66: .75, 67: .76, 68: 2, 69: .17})],
      [blue, series(0.02, {37: .05, 59: .46, 60: .12, 61: .03, 64: .11, 65: .5, 66: .54, 67: .55, 68: .51, 69: .03})]
    ]
  },
  load: {
    left: 65, label: 20, title: '平均负荷', titleX: 25, max: 0.7,
    ticks: ['0', '0.1', '0.2', '0.3', '0.4', '0.5', '0.6', '0.7'],
    data: [
      [green, series(0.002, {8: .229, 9: .096, 10: .033, 11: .011, 21: .032, 22: .031, 23: .01, 24: .003, 28: .015, 29: .048, 30: .016, 31: .004, 37: .014, 38: .048, 39: .016, 40: .003, 42: .032, 43: .031, 44: .01, 45: .003, 59: .116, 60: .695, 61: .453, 62: .247, 63: .13, 64: .158, 65: .276, 66: .272, 67: .28, 68: .39, 69: .24})]
    ]
  },
  memory: {
    left: 68, label: 21, title: 'Bytes', titleX: 20, max: 16,
    ticks: ['0', '2 Gi', '4 Gi', '6 Gi', '8 Gi', '10 Gi', '12 Gi', '14 Gi', '16 Gi'],
    data: [[green, series(15.46, {})], [blue, series(1.6, {})]]
  },
  network: {
    left: 52, label: 24, max: 3.5,
    ticks: ['0', '500 k', '1 M', '1.5 M', '2 M', '2.5 M', '3 M', '3.5 M'],
    data: [[green, series(0.002, {59: 3.05})], [blue, series(0.001, {})]]
  }
};

function draw(box) {
  const c = charts[box.dataset.chart];
  const width = box.clientWidth;
  const right = width - RIGHT;
  const x = i => c.left + (right - c.left) * i / STEPS;
  const y = v => BOTTOM - (BOTTOM - TOP) * v / c.max;
  const snap = v => Math.round(v) + 0.5;
  let s = `<svg xmlns="http://www.w3.org/2000/svg"><clipPath id="clip-${box.dataset.chart}"><rect x="${c.left}" y="${TOP}" width="${right - c.left + 1}" height="${BOTTOM - TOP}"/></clipPath>`;
  const n = c.ticks.length - 1;
  c.ticks.forEach((t, k) => {
    const py = snap(y(c.max * k / n));
    s += `<path class="grid-line" d="M${c.left} ${py}H${right}"/><path class="axis" d="M${c.left - 4} ${py}h4"/>`;
    s += `<text x="${c.left - c.label}" y="${Math.round(py) + 3}">${t}</text>`;
  });
  for (let i = 0; i <= STEPS; i++) {
    const px = snap(x(i));
    if (i) s += `<path class="grid-line" d="M${px} ${TOP}V${BOTTOM}"/>`;
    s += `<path class="axis" d="M${px} ${BOTTOM}v5"/>`;
    if (i % 6 === 0) {
      const m = 42 + i;
      const time = `${20 + Math.floor(m / 60)}:${String(m % 60).padStart(2, '0')}:00`;
      s += `<text x="${Math.round(px) + 1}" y="${BOTTOM + 19}">2025-05-25</text><text x="${Math.round(px)}" y="${BOTTOM + 34}">${time}</text>`;
    }
  }
  s += `<g clip-path="url(#clip-${box.dataset.chart})">`;
  c.data.forEach(([[fill, stroke], pts]) => {
    const line = pts.map(([i, v]) => `${x(i).toFixed(1)} ${y(v).toFixed(1)}`).join('L');
    s += `<g class="series"><path fill="${fill}" d="M${x(FIRST).toFixed(1)} ${BOTTOM}L${line}V${BOTTOM}z"/><path fill="none" stroke="${stroke}" stroke-width="2" d="M${line}"/></g>`;
  });
  if (c.marker) s += `<circle cx="${x(c.marker[0])}" cy="${y(c.marker[1])}" r="6" fill="${green[0]}" stroke="${green[1]}" stroke-width="2"/>`;
  s += `</g><path class="axis" d="M${snap(c.left)} ${TOP}V${BOTTOM + 1}M${c.left} ${BOTTOM + 0.5}H${right + 1}"/>`;
  if (c.title) s += `<text class="axis-title" transform="translate(${c.titleX + 5} ${(TOP + BOTTOM) / 2}) rotate(-90)">${c.title}</text>`;
  box.innerHTML = s + '</svg>';
}

const observer = new ResizeObserver(entries => entries.forEach(e => draw(e.target)));
document.querySelectorAll('.chart').forEach(box => { draw(box); observer.observe(box); });
```
